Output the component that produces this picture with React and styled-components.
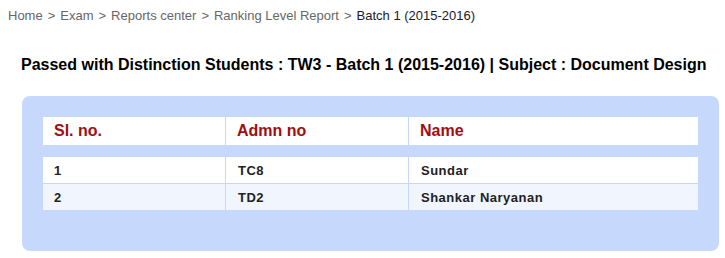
import React from "react";
import styled, { createGlobalStyle } from "styled-components";

const GlobalStyle = createGlobalStyle`
  body {
    margin: 0;
    background: #fff;
    font-family: "Liberation Sans", Arial, sans-serif;
  }
`;

const rows = [
  { sl: "1", admn: "TC8", name: "Sundar" },
  { sl: "2", admn: "TD2", name: "Shankar Naryanan" },
];

function App() {
  return (
    <>
      <GlobalStyle />
      <Page>
        <Breadcrumb>
          <Crumb>Home</Crumb>
          <Sep>&gt;</Sep>
          <Crumb>Exam</Crumb>
          <Sep>&gt;</Sep>
          <Crumb>Reports center</Crumb>
          <Sep>&gt;</Sep>
          <Crumb>Ranking Level Report</Crumb>
          <Sep>&gt;</Sep>
          <Crumb $current>Batch 1 (2015-2016)</Crumb>
        </Breadcrumb>
        <Title>
          Passed with Distinction Students : TW3 - Batch 1 (2015-2016) | Subject : Document Design
        </Title>
        <Panel>
          <HeadTable>
            <Row>
              <HeadCell>Sl. no.</HeadCell>
              <HeadCell>Admn no</HeadCell>
              <HeadCell>Name</HeadCell>
            </Row>
          </HeadTable>
          <BodyTable>
            {rows.map((r, i) => (
              <Row key={r.sl} $alt={i % 2 === 1}>
                <Cell>{r.sl}</Cell>
                <Cell $indent>{r.admn}</Cell>
                <Cell $indent>{r.name}</Cell>
              </Row>
            ))}
          </BodyTable>
        </Panel>
      </Page>
    </>
  );
}

export default App;

const Page = styled.div`
  width: 725px;
  height: 258px;
  padding: 8px 0 0 8px;
  box-sizing: border-box;
`;

const Breadcrumb = styled.div`
  display: flex;
  gap: 5px;
  font-size: 13px;
  line-height: 15px;
  color: #666;
`;

const Crumb = styled.span`
  color: ${(p) => (p.$current ? "#1a1a2a" : "#666")};
`;

const Sep = styled.span`
  color: #666;
`;

const Title = styled.h2`
  margin: 33px 0 0 13px;
  font-size: 16px;
  line-height: 18px;
  font-weight: bold;
  color: #000;
  white-space: nowrap;
`;

const Panel = styled.div`
  margin: 22px 0 0 14px;
  width: 697px;
  height: 155px;
  box-sizing: border-box;
  padding: 21px 21px 0;
  background: #c6d9fd;
  border-radius: 8px;
  display: flex;
  flex-direction: column;
  gap: 12px;
`;

const HeadTable = styled.div`
  display: flex;
  flex-direction: column;
`;

const BodyTable = styled.div`
  display: flex;
  flex-direction: column;
  gap: 1px;
`;

const Row = styled.div`
  display: grid;
  grid-template-columns: 182px 183px 290px;
  background: ${(p) => (p.$alt ? "#f0f5fe" : "#fff")};
`;

const HeadCell = styled.div`
  height: 28px;
  display: flex;
  align-items: center;
  padding-left: 11px;
  font-size: 16px;
  font-weight: bold;
  color: #a00e0e;
  & + & {
    border-left: 1px solid #c6d9fd;
  }
`;

const Cell = styled.div`
  height: 26px;
  display: flex;
  align-items: center;
  padding-left: ${(p) => (p.$indent ? "12px" : "11px")};
  font-size: 13px;
  font-weight: bold;
  letter-spacing: 0.5px;
  color: #222;
  & + & {
    border-left: 1px solid #c6d9fd;
  }
`;
